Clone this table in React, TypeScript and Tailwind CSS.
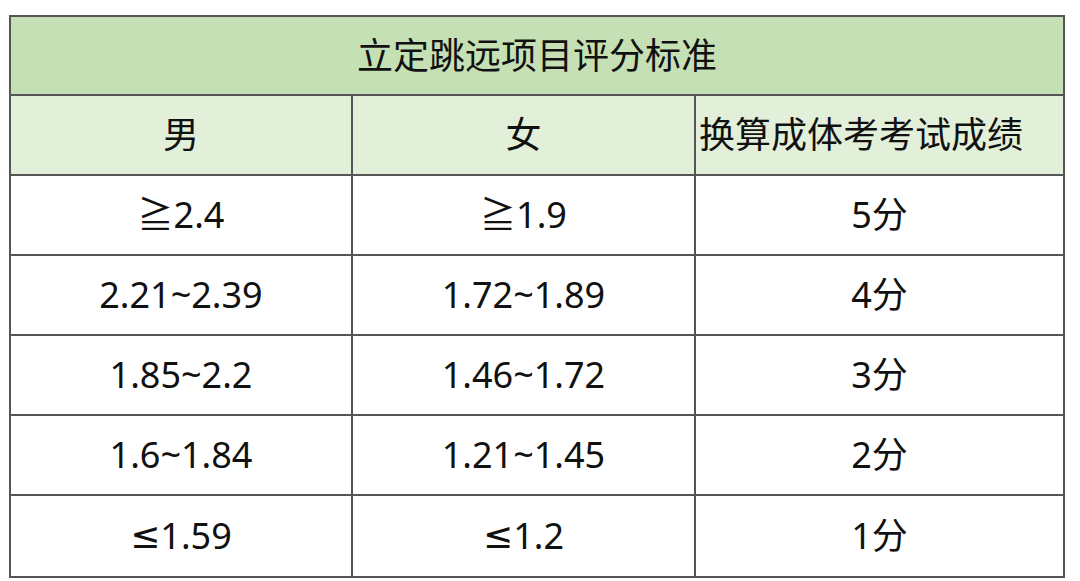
const rows = [
  ['≧2.4', '≧1.9', '5分'],
  ['2.21~2.39', '1.72~1.89', '4分'],
  ['1.85~2.2', '1.46~1.72', '3分'],
  ['1.6~1.84', '1.21~1.45', '2分'],
  ['≤1.59', '≤1.2', '1分'],
]

const font = { fontFamily: '"Noto Sans", "Noto Sans CJK SC", sans-serif' }

function Cell({ text, last }: { text: string; last?: boolean }) {
  // ≤ falls back to a CJK glyph in Noto Sans, so give it a Latin font
  const le = text.startsWith('≤')
  return (
    <div className={'flex items-center justify-center ' + (last ? '' : 'border-r-2 border-[#555]')}>
      {le ? (
        <>
          <span className="font-['DejaVu_Sans']">≤</span>
          {text.slice(1)}
        </>
      ) : (
        text
      )}
    </div>
  )
}

export default function App() {
  return (
    <div className="w-[1080px] h-[581px] bg-white pt-[15px] pl-[9px]" style={font}>
      <div className="w-[1056px] border-2 border-[#555] text-[#111]">
        <div className="h-[79px] bg-[#c5e0b4] flex items-center justify-center text-[36px] border-b-2 border-[#555]">
          立定跳远项目评分标准
        </div>
        <div className="grid grid-cols-[342px_343px_1fr] h-[80px] bg-[#e2efd9] border-b-2 border-[#555] text-[36px]">
          <Cell text="男" />
          <Cell text="女" />
          <div className="flex items-center pl-[3px]">换算成体考考试成绩</div>
        </div>
        {rows.map((r, i) => (
          <div
            key={i}
            className={
              'grid grid-cols-[342px_343px_1fr] h-[80px] text-[36px] ' +
              (i < rows.length - 1 ? 'border-b-2 border-[#555]' : '')
            }
          >
            <Cell text={r[0]} />
            <Cell text={r[1]} />
            <Cell text={r[2]} last />
          </div>
        ))}
      </div>
    </div>
  )
}
